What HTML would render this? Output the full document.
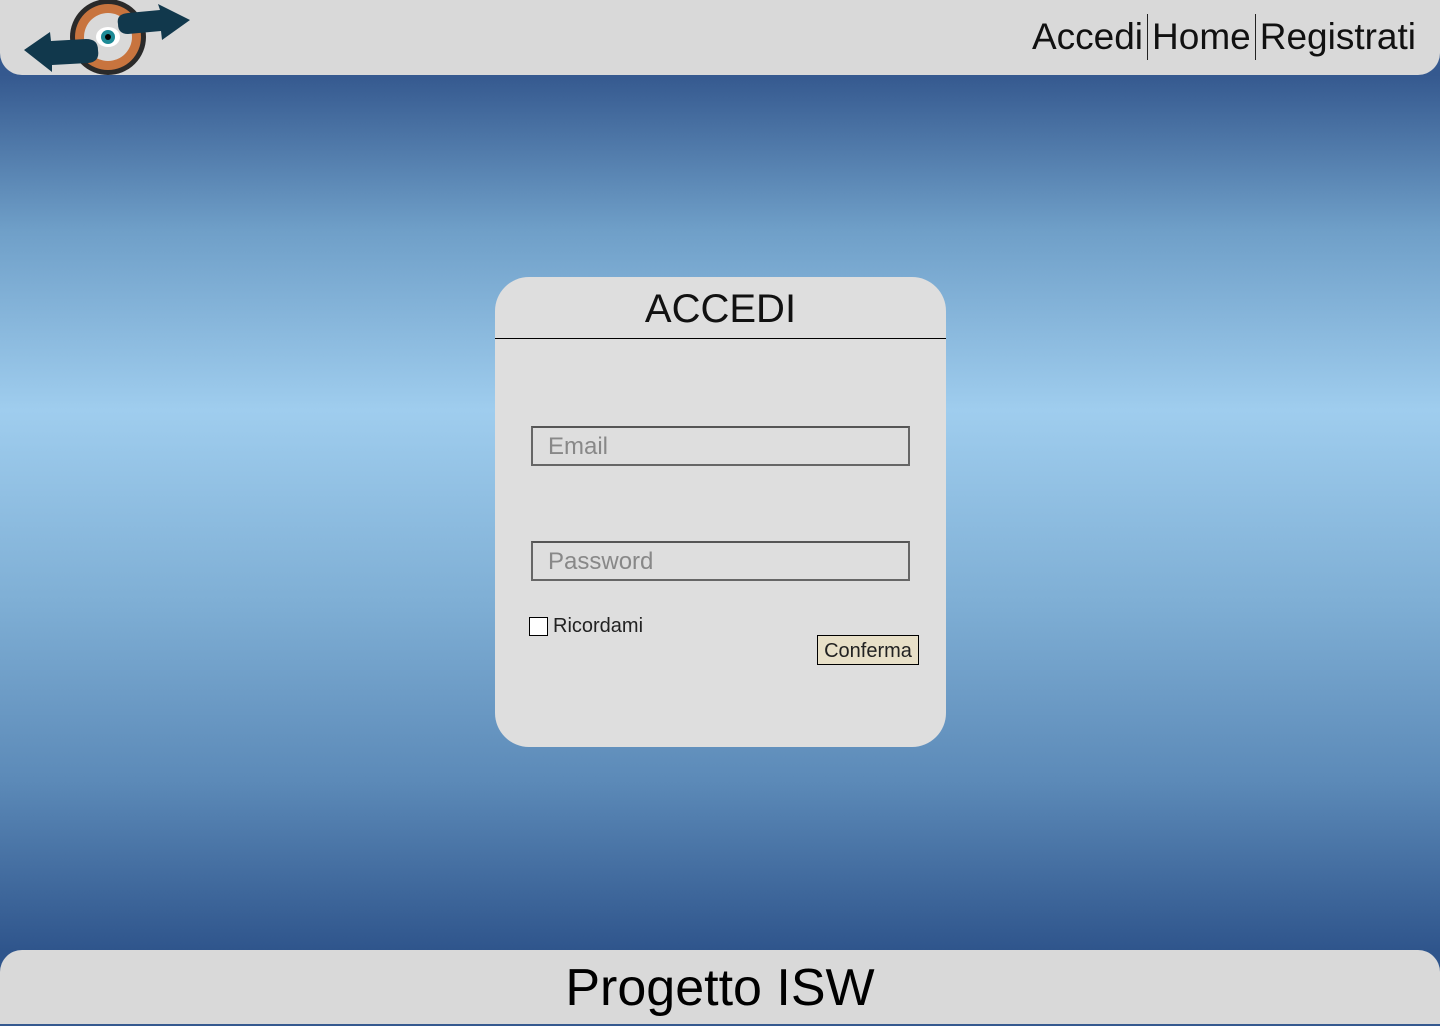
<!DOCTYPE html>
<html><head><meta charset="utf-8"><style>
*{margin:0;padding:0;box-sizing:border-box}
body{width:1440px;height:1024px;overflow:hidden;font-family:"Liberation Sans",sans-serif;
background:linear-gradient(180deg,#35598f 75px,#6f9fc8 230px,#9fcdee 410px,#7fafd5 600px,#5c8ab8 780px,#2f558c 950px);position:relative}
.hdr{position:absolute;left:0;top:0;width:1440px;height:75px;background:#d9d9d9;border-radius:0 0 22px 22px}
.nav{position:absolute;top:14px;right:20px;display:flex;font-size:37px;font-weight:300;color:#111;line-height:46px}
.nav span{padding:0 4px}
.nav .sep{width:1px;background:#222;height:46px;padding:0}
.ftr{position:absolute;left:0;top:950px;width:1440px;height:74px;background:#d9d9d9;border-radius:22px 22px 0 0;text-align:center;font-size:52px;line-height:76px;color:#000}
.card{position:absolute;left:495px;top:277px;width:451px;height:470px;background:#dedede;border-radius:34px}
.title{position:absolute;left:0;top:0;width:100%;height:62px;border-bottom:1.5px solid #000;text-align:center;font-size:40px;line-height:64px;font-weight:300;color:#111}
.inp{position:absolute;left:36px;width:379px;height:40px;border:2px solid #666;border-top-color:#555;font-size:24px;color:#888;padding-left:15px;line-height:38px}
.cb{position:absolute;left:34px;top:340px;width:19px;height:19px;background:#fff;border:1.5px solid #000}
.lbl{position:absolute;left:58px;top:338px;font-size:20px;color:#222}
.btn{position:absolute;left:322px;top:358px;width:102px;height:30px;background:#e8e0c8;border:1.5px solid #000;font-size:20px;line-height:30px;text-align:center;color:#222}
</style></head><body>
<div class="hdr">
<svg style="position:absolute;left:0;top:0" width="200" height="78" viewBox="0 0 200 78">
<circle cx="108" cy="37" r="38" fill="#2a2a2a"/>
<circle cx="108" cy="37" r="33" fill="#c8743e"/>
<circle cx="108" cy="37" r="24" fill="#d9d9d9"/>
<path d="M118 24 Q116 14 128 13 L160 10 L158 4 L190 20 L162 40 L161 31 L128 34 Q118 34 118 24Z" fill="#11384c"/>
<path d="M98 50 Q100 62 88 63 L52 65 L52 72 L24 50 L50 32 L51 41 L86 39 Q98 39 98 50Z" fill="#11384c"/>
<ellipse cx="108" cy="37" rx="12" ry="10" fill="#fff"/>
<circle cx="108" cy="37" r="7" fill="#1d8a96"/>
<circle cx="108" cy="37" r="3" fill="#000"/>
</svg>
<div class="nav"><span>Accedi</span><div class="sep"></div><span>Home</span><div class="sep"></div><span>Registrati</span></div>
</div>
<div class="card">
<div class="title">ACCEDI</div>
<div class="inp" style="top:149px">Email</div>
<div class="inp" style="top:264px">Password</div>
<div class="cb"></div><div class="lbl">Ricordami</div>
<div class="btn">Conferma</div>
</div>
<div class="ftr">Progetto ISW</div>
</body></html>
